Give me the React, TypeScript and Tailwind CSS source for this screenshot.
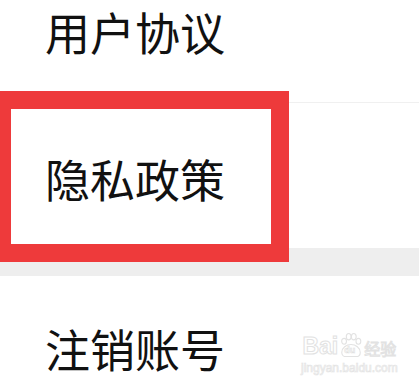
import React from "react";

const rowText = "text-[45px] leading-none text-[#111] pl-[45px]";

const Watermark = () => (
  <div className="absolute left-[301px] top-[332px] flex flex-col items-center select-none">
    <div className="flex items-end gap-[1px]">
      <span className="text-[23px] font-bold leading-none [font-family:'Liberation_Sans',sans-serif] text-white [-webkit-text-stroke:1px_#e2e2e2]">
        Bai
      </span>
      <span className="relative w-[24px] h-[26px]">
        <svg viewBox="0 0 26 28" className="w-[24px] h-[26px]" fill="none" stroke="#e2e2e2" strokeWidth="1.2">
          <ellipse cx="5.5" cy="10" rx="2.6" ry="3.2" />
          <ellipse cx="10.5" cy="5" rx="2.6" ry="3.4" />
          <ellipse cx="16" cy="5" rx="2.6" ry="3.4" />
          <ellipse cx="21" cy="10" rx="2.6" ry="3.2" />
          <path d="M3 22c0-5 5-8.5 10-8.5S23 17 23 22c0 3-2.2 4.5-4.5 4.5h-11C5.2 26.5 3 25 3 22z" />
        </svg>
        <span className="absolute left-[5px] top-[14px] text-[9px] font-bold leading-none text-white [-webkit-text-stroke:0.6px_#dedede] [font-family:'Liberation_Sans',sans-serif]">
          du
        </span>
      </span>
      <span className="text-[16px] leading-none mb-[2px] text-white [-webkit-text-stroke:1px_#e2e2e2] [font-family:'Noto_Sans_CJK_SC',sans-serif]">
        经验
      </span>
    </div>
    <span className="mt-[4px] text-[12px] leading-none text-white [-webkit-text-stroke:0.7px_#e4e4e4] [font-family:'Liberation_Sans',sans-serif]">
      jingyan.baidu.com
    </span>
  </div>
);

export default function App() {
  return (
    <div className="relative w-[419px] h-[389px] overflow-hidden bg-white [font-family:'Noto_Sans_CJK_SC',sans-serif]">
      <div className="flex flex-col">
        <div className="h-[103px] pt-[9px] border-b border-[#f0f0f0]">
          <div className={rowText}>用户协议</div>
        </div>
        <div className="h-[145px] flex items-center pt-[6px]">
          <div className={rowText}>隐私政策</div>
        </div>
        <div className="h-[28px] bg-[#eeeeee]" />
        <div className="h-[112px] pt-[50px]">
          <div className={rowText}>注销账号</div>
        </div>
      </div>

      <div className="absolute left-[-7px] top-[91px] w-[296px] h-[171px] border-[18px] border-[#ee3a3b]" />

      <Watermark />
    </div>
  );
}
